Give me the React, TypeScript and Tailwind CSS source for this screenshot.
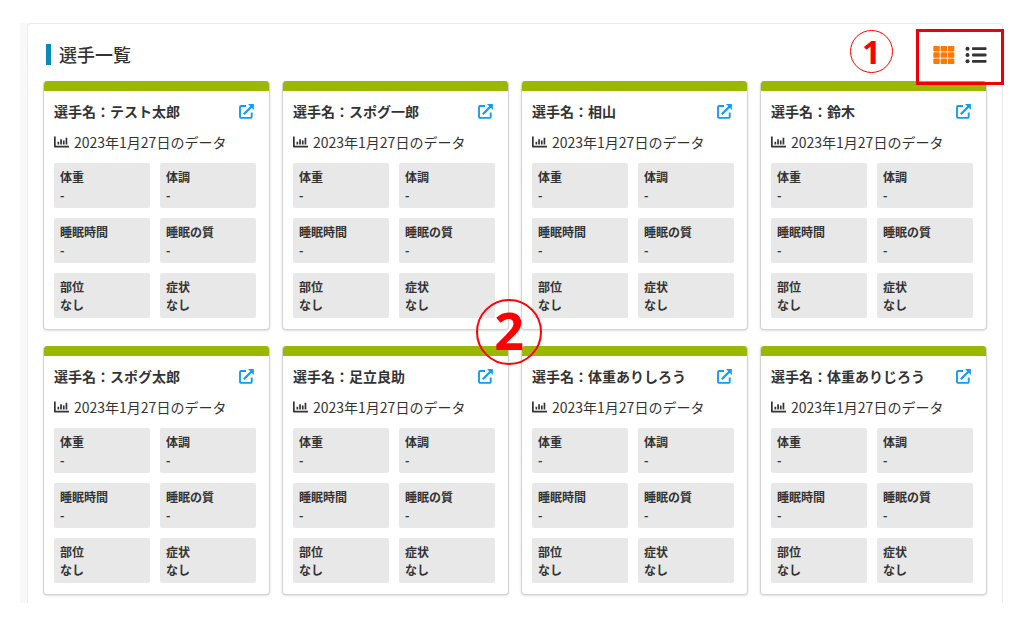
const players = ['テスト太郎', 'スポグ一郎', '相山', '鈴木', 'スポグ太郎', '足立良助', '体重ありしろう', '体重ありじろう'];

const metrics = [
  { label: '体重', value: '-' },
  { label: '体調', value: '-' },
  { label: '睡眠時間', value: '-' },
  { label: '睡眠の質', value: '-' },
  { label: '部位', value: 'なし' },
  { label: '症状', value: 'なし' },
];

function GridIcon() {
  return (
    <svg width="22" height="18" viewBox="0 0 22 18" fill="currentColor" aria-hidden="true">
      {[0, 6.3, 12.6].map((y) =>
        [0, 7.3, 14.6].map((x) => <rect key={`${x}-${y}`} x={x + 0.3} y={y} width="6.4" height="5.4" rx="0.8" />),
      )}
    </svg>
  );
}

function ListIcon() {
  return (
    <svg width="22" height="18" viewBox="0 0 22 18" fill="currentColor" aria-hidden="true">
      {[2.7, 9, 15.3].map((y) => (
        <g key={y}>
          <circle cx="2.5" cy={y} r="2" />
          <rect x="7" y={y - 1.4} width="14.5" height="2.8" rx="0.8" />
        </g>
      ))}
    </svg>
  );
}

function ChartIcon() {
  return (
    <svg className="shrink-0" width="15" height="12" viewBox="0 0 15 12" fill="currentColor" aria-hidden="true">
      <path d="M0 .5h1.7v9.2H15v1.8H.8a.8.8 0 0 1-.8-.8z" />
      <path d="M3.5 5.8h1.7v2.8H3.5zM6.2 3.2h1.7v5.4H6.2zM8.9 4.5h1.7v4.1H8.9zM11.6 1.8h1.7v6.8h-1.7z" />
    </svg>
  );
}

function ExternalLinkIcon() {
  return (
    <svg width="15" height="15" viewBox="0 0 15 15" fill="none" stroke="currentColor" aria-hidden="true">
      <path d="M7 2H2.2A1.2 1.2 0 0 0 1 3.2v9.5a1.2 1.2 0 0 0 1.2 1.2h9.3a1.2 1.2 0 0 0 1.2-1.2V8.6" strokeWidth="1.9" />
      <path d="M4.8 10.2l7.7-7.7" strokeWidth="2.3" />
      <path d="M9 .1h5.4a.5.5 0 0 1 .5.5V6z" fill="currentColor" stroke="none" />
    </svg>
  );
}

function PlayerCard({ name }: { name: string }) {
  return (
    <article className="overflow-hidden rounded border border-t-0 border-[#d3d3d3] bg-white shadow-sm">
      <div className="h-2.5 bg-[#9ab800]" />
      <div className="pt-[5px] pr-[13px] pb-[11px] pl-2.5">
        <div className="flex h-[30px] items-center justify-between pr-0.5">
          <h2 className="text-[14px] font-bold whitespace-nowrap">選手名：{name}</h2>
          <a href="#player" aria-label={`${name}の詳細`} className="text-[#119df5]">
            <ExternalLinkIcon />
          </a>
        </div>
        <p className="flex h-8 items-center gap-[5px] text-[14px] whitespace-nowrap">
          <ChartIcon />
          2023年1月27日のデータ
        </p>
        <dl className="mt-[5px] grid grid-cols-2 gap-2.5 text-[12px] leading-[18px]">
          {metrics.map(({ label, value }) => (
            <div key={label} className="rounded-xs bg-[#e8e8e8] px-1.5 pt-[5px] pb-1">
              <dt className="font-bold">{label}</dt>
              <dd className="font-bold">{value}</dd>
            </div>
          ))}
        </dl>
      </div>
    </article>
  );
}

export default function App() {
  return (
    <div className="bg-white pt-[23px] pr-[21px] pb-[22px] pl-5 font-['Noto_Sans_CJK_JP',sans-serif] text-[#333333]">
      <div className="relative bg-[#f9f9f9] pl-[7px]">
        <main className="rounded-t border border-b-0 border-[#ebebeb] bg-white pr-[15px] pb-2 pl-[15px]">
          <header className="flex h-[57px] items-center justify-between pt-1 pl-[3px]">
            <h1 className="flex items-center gap-2 text-[18px] leading-[21px] font-medium">
              <span className="h-[21px] w-[5px] bg-[#0a8ab8]" />
              選手一覧
            </h1>
            <div className="flex gap-2.5">
              <button type="button" aria-label="カード表示" className="text-[#ff7800]">
                <GridIcon />
              </button>
              <button type="button" aria-label="リスト表示">
                <ListIcon />
              </button>
            </div>
          </header>
          <section className="grid grid-cols-4 gap-x-3 gap-y-4">
            {players.map((name) => (
              <PlayerCard key={name} name={name} />
            ))}
          </section>
        </main>
        <div className="pointer-events-none absolute top-1.5 -right-px h-14 w-[88px] border-3 border-[#ee0000]" />
        <div className="pointer-events-none absolute top-[7px] right-[110px] flex size-[43px] items-center justify-center rounded-full border border-[#ff0000] font-['Noto_Sans',sans-serif] text-[33px] leading-none font-bold text-[#ff0000]">
          1
        </div>
        <div className="pointer-events-none absolute top-[276px] left-[456px] flex size-[66px] items-center justify-center rounded-full border-2 border-[#ff0000] pb-1 font-['Noto_Sans',sans-serif] text-[52px] leading-none font-bold text-[#ff0000]">
          2
        </div>
      </div>
    </div>
  );
}
